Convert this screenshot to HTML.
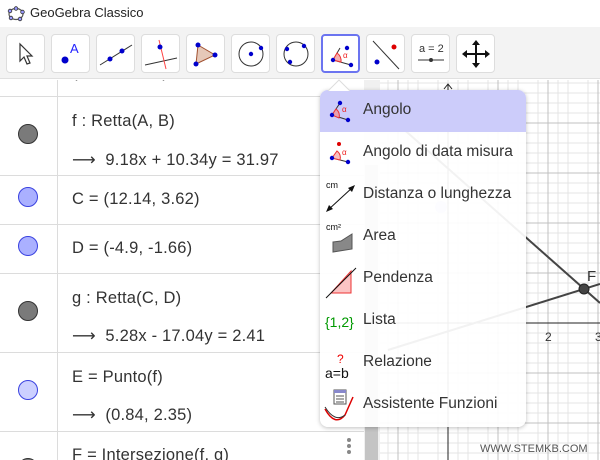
<!DOCTYPE html>
<html><head><meta charset="utf-8"><style>
*{margin:0;padding:0;box-sizing:border-box}
body{width:600px;height:460px;overflow:hidden;background:#fff;font-family:"Liberation Sans","DejaVu Sans",sans-serif;position:relative}
.abs{position:absolute}
#title{left:0;top:0;width:600px;height:27px;background:#fff}
#title span{position:absolute;left:30px;top:5px;font-size:13px;color:#222}
#tb{left:0;top:27px;width:600px;height:52px;background:#f3f3f3;border-bottom:1px solid #e0e0e0}
.btn{position:absolute;top:7px;width:39px;height:39px;background:#fff;border:1px solid #ddd;border-radius:4px}
.btn.sel{border:2px solid #6b74f0}
#alg{left:0;top:80px;width:364px;height:380px;background:#fff;overflow:hidden}
.hl{position:absolute;left:0;width:364px;height:1px;background:#dcdcdc}
.vl{position:absolute;left:57px;top:0;width:1px;height:380px;background:#dcdcdc}
.dot{position:absolute;left:18px;width:20px;height:20px;border-radius:50%}
.gd{background:#7a7a7a;border:1px solid #333}
.bd{background:#aab0ff;border:1px solid #3a42e0}
.ld{background:#ccd0ff;border:1px solid #3a42e0}
.t{position:absolute;left:72px;font-size:16.5px;color:#333;white-space:nowrap;letter-spacing:0.2px}
#sb{left:364px;top:80px;width:16px;height:380px;background:#f0f0f0}
#thumb{left:365px;top:165px;width:13px;height:295px;background:#c4c4c4}
#menu{left:320px;top:90px;width:206px;height:337px;background:rgba(255,255,255,0.93);border-radius:8px;box-shadow:0 1px 4px rgba(0,0,0,.25);overflow:hidden}
.mi{position:absolute;left:0;width:206px;height:42px}
.mi span{position:absolute;left:43px;top:11px;font-size:15.5px;color:#333}
.mi svg{position:absolute;left:3px;top:3px}
</style></head><body>
<div id="title" class="abs">
<svg class="abs" style="left:7px;top:6px" width="18" height="16" viewBox="0 0 18 16"><ellipse cx="9" cy="8" rx="7" ry="5.5" fill="none" stroke="#555" stroke-width="1.2"/><g fill="#99f" stroke="#333" stroke-width=".8"><circle cx="3" cy="5" r="1.8"/><circle cx="9" cy="2.5" r="1.8"/><circle cx="15.5" cy="6" r="1.8"/><circle cx="13" cy="13" r="1.8"/><circle cx="4" cy="12" r="1.8"/></g></svg>
<span>GeoGebra Classico</span></div>
<div id="tb" class="abs">
<div class="btn" style="left:6px"><svg width="37" height="37"><path d="M13 9 L13 26 L17 22 L20 29 L23 28 L20 21 L25 21 Z" fill="#fff" stroke="#333" stroke-width="1.2"/></svg></div>
<div class="btn" style="left:51px"><svg width="37" height="37"><circle cx="13" cy="25" r="3.5" fill="#00c"/><text x="18" y="18" font-size="13" fill="#22f" font-family="Liberation Sans">A</text></svg></div>
<div class="btn" style="left:96px"><svg width="37" height="37"><line x1="3" y1="30" x2="35" y2="10" stroke="#333"/><circle cx="13" cy="24" r="2.5" fill="#00c"/><circle cx="25" cy="16" r="2.5" fill="#00c"/></svg></div>
<div class="btn" style="left:141px"><svg width="37" height="37"><line x1="3" y1="30" x2="35" y2="23" stroke="#333"/><line x1="17" y1="5" x2="24" y2="34" stroke="#f44"/><circle cx="18" cy="12" r="2.5" fill="#00c"/></svg></div>
<div class="btn" style="left:186px"><svg width="37" height="37"><path d="M11 10 L28 20 L9 29Z" fill="#e6c8b8" stroke="#a05030"/><circle cx="11" cy="10" r="2.5" fill="#00c"/><circle cx="28" cy="20" r="2.5" fill="#00c"/><circle cx="9" cy="29" r="2.5" fill="#00c"/></svg></div>
<div class="btn" style="left:231px"><svg width="37" height="37"><circle cx="19" cy="19" r="12" fill="none" stroke="#333"/><circle cx="19" cy="19" r="2.2" fill="#00c"/><circle cx="29" cy="13" r="2.2" fill="#00c"/></svg></div>
<div class="btn" style="left:276px"><svg width="37" height="37"><circle cx="19" cy="19" r="12" fill="none" stroke="#333"/><circle cx="10" cy="14" r="2.2" fill="#00c"/><circle cx="27" cy="11" r="2.2" fill="#00c"/><circle cx="13" cy="27" r="2.2" fill="#00c"/></svg></div>
<div class="btn sel" style="left:321px"><svg width="35" height="35"><path d="M10 24 L17 12 M10 24 L28 29" stroke="#333"/><path d="M10 24 L14 17 A9 9 0 0 1 18 26Z" fill="#f4b0b0" stroke="#e33"/><text x="20" y="22" font-size="8" fill="#e22">α</text><circle cx="10" cy="24" r="2.2" fill="#00c"/><circle cx="24" cy="12" r="2.2" fill="#00c"/><circle cx="28" cy="29" r="2.2" fill="#00c"/></svg></div>
<div class="btn" style="left:366px"><svg width="37" height="37"><line x1="6" y1="6" x2="32" y2="34" stroke="#333"/><circle cx="27" cy="12" r="2.5" fill="#d00"/><circle cx="10" cy="27" r="2.5" fill="#00c"/></svg></div>
<div class="btn" style="left:411px"><svg width="37" height="37"><text x="7" y="17" font-size="11" fill="#333" font-family="Liberation Sans">a = 2</text><line x1="6" y1="25" x2="32" y2="25" stroke="#333"/><circle cx="19" cy="25" r="2" fill="#333"/></svg></div>
<div class="btn" style="left:456px"><svg width="37" height="37"><path d="M19 7V31M7 19H31" stroke="#111" stroke-width="2"/><path d="M19 5L15 10H23ZM19 33L15 28H23ZM5 19L10 15V23ZM33 19L28 15V23Z" fill="#111"/></svg></div>
</div>

<svg class="abs" style="left:380px;top:80px" width="220" height="380">
<g stroke="#e4e4e4" stroke-width="1">
<path d="M8 0V380M18 0V380M28 0V380M38 0V380M58 0V380M68 0V380M78 0V380M88 0V380M108 0V380M118 0V380M128 0V380M138 0V380M158 0V380M168 0V380M178 0V380M188 0V380M208 0V380M218 0V380"/>
<path d="M0 3H220M0 13H220M0 23H220M0 33H220M0 53H220M0 63H220M0 73H220M0 83H220M0 103H220M0 113H220M0 123H220M0 133H220M0 153H220M0 163H220M0 173H220M0 183H220M0 203H220M0 213H220M0 223H220M0 233H220M0 253H220M0 263H220M0 273H220M0 283H220M0 303H220M0 313H220M0 323H220M0 333H220M0 353H220M0 363H220M0 373H220"/>
</g>
<g stroke="#c0c0c0"><path d="M18 0V380M118 0V380M168 0V380M218 0V380M0 43H220M0 93H220M0 143H220M0 193H220M0 293H220M0 343H220"/></g>
<path d="M68 4V380M0 243H220" stroke="#222"/>
<path d="M64 9L68 4L72 9" stroke="#222" fill="none"/>
<text x="165" y="261" font-size="12" fill="#333">2</text><text x="215" y="261" font-size="12" fill="#333">3</text>
<line x1="20" y1="46" x2="220" y2="223" stroke="#444" stroke-width="2"/>
<line x1="8" y1="270" x2="220" y2="204" stroke="#444" stroke-width="2"/>
<circle cx="61" cy="127" r="6" fill="#ccd0ff"/>
<text x="207" y="201" font-size="15" fill="#333">F</text>
<circle cx="204" cy="209" r="5" fill="#444" stroke="#222"/>
<text x="100" y="372" font-size="11" fill="#555">WWW.STEMKB.COM</text>
</svg>

<div id="alg" class="abs">
<div class="vl"></div>
<div class="t" style="top:-17px">(12.14, 3.62)</div>
<div class="hl" style="top:16px"></div>
<div class="dot gd" style="top:44px"></div>
<div class="t" style="top:32px">f : Retta(A, B)</div>
<div class="t" style="top:70px">⟶&nbsp; 9.18x + 10.34y = 31.97</div>
<div class="hl" style="top:95px"></div>
<div class="dot bd" style="top:107px"></div>
<div class="t" style="top:110px">C = (12.14, 3.62)</div>
<div class="hl" style="top:144px"></div>
<div class="dot bd" style="top:156px"></div>
<div class="t" style="top:159px">D = (-4.9, -1.66)</div>
<div class="hl" style="top:193px"></div>
<div class="dot gd" style="top:221px"></div>
<div class="t" style="top:209px">g : Retta(C, D)</div>
<div class="t" style="top:246px">⟶&nbsp; 5.28x - 17.04y = 2.41</div>
<div class="hl" style="top:272px"></div>
<div class="dot ld" style="top:300px"></div>
<div class="t" style="top:288px">E = Punto(f)</div>
<div class="t" style="top:325px">⟶&nbsp; (0.84, 2.35)</div>
<div class="hl" style="top:351px"></div>
<div class="dot gd" style="top:378px"></div>
<div class="t" style="top:366px">F = Intersezione(f, g)</div>
<svg class="abs" style="left:345px;top:357px" width="8" height="20"><circle cx="4" cy="3" r="2" fill="#888"/><circle cx="4" cy="9" r="2" fill="#888"/><circle cx="4" cy="15" r="2" fill="#888"/></svg>
</div>
<div id="sb" class="abs"></div>
<div id="thumb" class="abs"></div>

<div id="menu" class="abs">
<div class="mi" style="top:0;background:#ccccfa"><svg width="36" height="36"><path d="M9 22 L17 10 M9 22 L25 27" stroke="#333"/><path d="M9 22 L13 16 A8 8 0 0 1 16 25Z" fill="#e8a0b0" stroke="#e33"/><text x="19" y="19" font-size="8" fill="#e22">α</text><circle cx="9" cy="22" r="2.2" fill="#00c"/><circle cx="17" cy="10" r="2.2" fill="#00c"/><circle cx="25" cy="27" r="2.2" fill="#00c"/></svg><span>Angolo</span></div>
<div class="mi" style="top:42px"><svg width="36" height="36"><circle cx="16" cy="9" r="2" fill="#d00"/><path d="M9 23 L25 27" stroke="#333"/><path d="M9 23 L14 16 A8 8 0 0 1 17 25Z" fill="#f8c0c0" stroke="#e33"/><text x="19" y="20" font-size="8" fill="#e22">α</text><circle cx="9" cy="23" r="2.2" fill="#00c"/><circle cx="25" cy="27" r="2.2" fill="#00c"/></svg><span>Angolo di data misura</span></div>
<div class="mi" style="top:84px"><svg width="38" height="38"><text x="3" y="11" font-size="9" fill="#111">cm</text><line x1="5" y1="33" x2="30" y2="10" stroke="#111"/><path d="M32 8L25 11L29 15Z M3 35L10 32L6 28Z" fill="#111"/></svg><span>Distanza o lunghezza</span></div>
<div class="mi" style="top:126px"><svg width="38" height="38"><text x="3" y="11" font-size="9" fill="#111">cm²</text><path d="M10 23 L18 22 L29 15 L29 30 L10 33Z" fill="#888" stroke="#555"/></svg><span>Area</span></div>
<div class="mi" style="top:168px"><svg width="38" height="38"><path d="M28 10 L28 32 L8 32Z" fill="#fbc4c4" stroke="#e33"/><line x1="3" y1="37" x2="33" y2="7" stroke="#111"/></svg><span>Pendenza</span></div>
<div class="mi" style="top:210px"><svg width="38" height="38"><text x="2" y="24" font-size="14" fill="#090" font-family="Liberation Sans">{1,2}</text></svg><span>Lista</span></div>
<div class="mi" style="top:252px"><svg width="38" height="38"><text x="14" y="18" font-size="12" fill="#e00" font-family="Liberation Sans">?</text><text x="2" y="33" font-size="14" fill="#111" font-family="Liberation Sans">a=b</text></svg><span>Relazione</span></div>
<div class="mi" style="top:294px"><svg width="38" height="38"><rect x="11" y="3" width="12" height="14" fill="#fff" stroke="#555"/><rect x="11" y="3" width="12" height="3" fill="#88c"/><path d="M13 9H21M13 12H21M13 15H21" stroke="#555"/><path d="M2 22 Q12 40 22 28 L30 10" fill="none" stroke="#d00" stroke-width="1.5"/><path d="M2 20 Q12 36 22 28" fill="none" stroke="#333"/></svg><span>Assistente Funzioni</span></div>
</div>
<svg class="abs" style="left:328px;top:79px" width="22" height="12"><path d="M0 12 L11 1 L22 12Z" fill="#fff"/><path d="M0 12 L11 1 L22 12" fill="none" stroke="#ddd"/></svg>
</body></html>
